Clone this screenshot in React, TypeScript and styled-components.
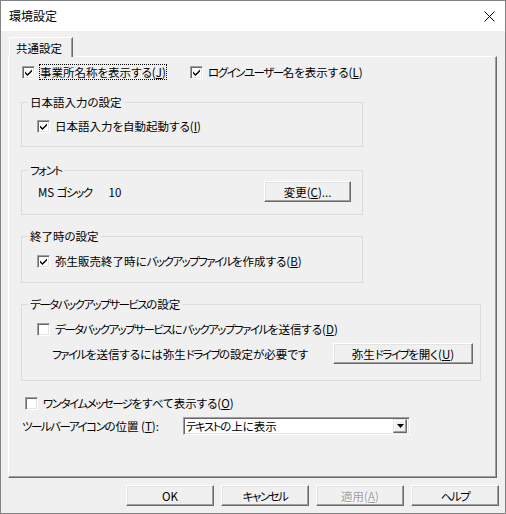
import React from 'react';
import styled, { createGlobalStyle } from 'styled-components';

const FONT = `"Noto Sans CJK JP", "Noto Sans", sans-serif`;

const Global = createGlobalStyle`
  html, body { margin: 0; padding: 0; background: #ffffff; }
  body { font-family: ${FONT}; font-size: 12px; }
  u { text-decoration: underline; text-underline-offset: 1px; }
`;

const Window = styled.div`
  width: 506px;
  height: 514px;
  box-sizing: border-box;
  border: 1px solid #838383;
  display: flex;
  flex-direction: column;
  background: #f0f0f0;
  font-family: ${FONT};
  font-size: 11.5px;
  line-height: 16px;
  color: #000;
  font-feature-settings: "palt";
`;

const TitleBar = styled.div`
  height: 30px;
  flex: none;
  background: #ffffff;
  display: flex;
  align-items: center;
  justify-content: space-between;
  padding: 0 10px 0 8px;
`;

const Title = styled.span`
  font-size: 12px;
`;

const Body = styled.div`
  flex: 1;
  display: flex;
  flex-direction: column;
  padding: 6px 8px 0 7px;
`;

const TabStrip = styled.div`
  display: flex;
  padding-left: 1px;
  position: relative;
  z-index: 1;
  margin-bottom: -1px;
`;

const Tab = styled.div`
  height: 20px;
  width: 64px;
  box-sizing: border-box;
  padding: 2px 0 0 6px;
  background: #f0f0f0;
  border-top: 1px solid #ffffff;
  border-left: 1px solid #ffffff;
  border-right: 1px solid #696969;
  box-shadow: inset -1px 0 #a0a0a0;
`;

const Panel = styled.div`
  height: 422px;
  box-sizing: border-box;
  border-top: 1px solid #ffffff;
  border-left: 1px solid #ffffff;
  border-right: 1px solid #696969;
  border-bottom: 1px solid #696969;
  box-shadow: inset -1px -1px #a0a0a0;
  padding: 6px 0 0 12px;
  display: flex;
  flex-direction: column;
`;

const Row = styled.div<{ $mt?: number; $pl?: number; $pr?: number }>`
  display: flex;
  align-items: center;
  height: 16px;
  margin-top: ${(p) => p.$mt ?? 0}px;
  padding-left: ${(p) => p.$pl ?? 0}px;
  padding-right: ${(p) => p.$pr ?? 0}px;
`;

const TallRow = styled(Row)`
  height: 21px;
`;

const CheckItem = styled.label<{ $w?: number }>`
  display: flex;
  align-items: center;
  gap: 4px;
  width: ${(p) => (p.$w ? `${p.$w}px` : 'auto')};
  white-space: nowrap;
`;

const Box = styled.span`
  width: 13px;
  height: 13px;
  box-sizing: border-box;
  flex: none;
  background: #ffffff;
  border: 1px solid;
  border-color: #a0a0a0 #ffffff #ffffff #a0a0a0;
  box-shadow: inset 1px 1px #696969, inset -1px -1px #e3e3e3;
  display: flex;
  align-items: center;
  justify-content: center;
`;

const LabelText = styled.span<{ $focus?: boolean }>`
  padding: 0 1px;
  outline: ${(p) => (p.$focus ? '1px dotted #000' : 'none')};
  outline-offset: -1px;
`;

const Kana = styled.span`
  letter-spacing: -1.5px;
`;

const Group = styled.fieldset<{ $w: number; $pt: number; $pb: number; $mt: number }>`
  margin: ${(p) => p.$mt}px 0 0 0;
  width: ${(p) => p.$w}px;
  box-sizing: border-box;
  border: 1px solid #dcdcdc;
  padding: ${(p) => p.$pt}px 0 ${(p) => p.$pb}px 15px;
  min-width: 0;
  display: flex;
  flex-direction: column;
`;

const Legend = styled.legend`
  margin-left: -9px;
  padding: 0 2px;
  line-height: 14px;
  height: 14px;
`;

const Button = styled.button<{ $w: number; $disabled?: boolean; $push?: boolean }>`
  width: ${(p) => p.$w}px;
  height: 21px;
  box-sizing: border-box;
  flex: none;
  margin-left: ${(p) => (p.$push ? 'auto' : '0')};
  background: #f0f0f0;
  border: 1px solid;
  border-color: #ffffff #696969 #696969 #ffffff;
  box-shadow: inset -1px -1px #a0a0a0, inset 1px 1px #e3e3e3;
  font-family: ${FONT};
  font-size: 11.5px;
  font-feature-settings: "palt";
  line-height: 16px;
  padding: 0;
  color: ${(p) => (p.$disabled ? '#a0a0a0' : '#000')};
  text-shadow: ${(p) => (p.$disabled ? '1px 1px #ffffff' : 'none')};
  cursor: default;
`;

const Spacer = styled.span<{ $w: number }>`
  display: inline-block;
  width: ${(p) => p.$w}px;
  flex: none;
`;

const FieldLabel = styled.span<{ $w: number }>`
  width: ${(p) => p.$w}px;
  flex: none;
  white-space: nowrap;
`;

const Combo = styled.div`
  width: 227px;
  height: 18px;
  box-sizing: border-box;
  background: #ffffff;
  border: 1px solid;
  border-color: #a0a0a0 #ffffff #ffffff #a0a0a0;
  box-shadow: inset 1px 1px #696969, inset -1px -1px #e3e3e3;
  display: flex;
  align-items: center;
  justify-content: space-between;
  padding: 0 2px 0 2px;
`;

const ComboText = styled.span`
  line-height: 14px;
`;

const DropButton = styled.span`
  width: 14px;
  height: 14px;
  box-sizing: border-box;
  background: #f0f0f0;
  border: 1px solid;
  border-color: #e3e3e3 #696969 #696969 #e3e3e3;
  box-shadow: inset -1px -1px #a0a0a0, inset 1px 1px #ffffff;
  display: flex;
  align-items: center;
  justify-content: center;
`;

const Footer = styled.div`
  display: flex;
  justify-content: flex-end;
  gap: 7px;
  padding: 7px 0 0 0;
  margin-right: -2px;
`;

const KANA_RE = /([\u30A0-\u30FF]+)/;

const J = ({ children }: { children: React.ReactNode }) => (
  <>
    {React.Children.map(children, (c) =>
      typeof c === 'string'
        ? c.split(KANA_RE).map((s, i) => (i % 2 ? <Kana key={i}>{s}</Kana> : s))
        : c
    )}
  </>
);

const Check = ({ on }: { on: boolean }) => (
  <Box>
    {on && (
      <svg width="9" height="9" viewBox="0 0 9 9">
        <path d="M1 3.5 L3.5 6 L8 1.5 L8 3.5 L3.5 8 L1 5.5 Z" fill="#000" />
      </svg>
    )}
  </Box>
);

const CheckBox = ({
  on,
  children,
  focus,
  w,
}: {
  on: boolean;
  children: React.ReactNode;
  focus?: boolean;
  w?: number;
}) => (
  <CheckItem $w={w}>
    <Check on={on} />
    <LabelText $focus={focus}>
      <J>{children}</J>
    </LabelText>
  </CheckItem>
);

export default function App() {
  return (
    <>
      <Global />
      <Window>
        <TitleBar>
          <Title>環境設定</Title>
          <svg width="11" height="11" viewBox="0 0 11 11">
            <path d="M0.5 0.5 L10.5 10.5 M10.5 0.5 L0.5 10.5" stroke="#000" strokeWidth="1" />
          </svg>
        </TitleBar>
        <Body>
          <TabStrip>
            <Tab>共通設定</Tab>
          </TabStrip>
          <Panel>
            <Row $mt={1} $pl={1}>
              <CheckBox on focus w={168}>
                事業所名称を表示する(<u>J</u>)
              </CheckBox>
              <CheckBox on>
                ログインユーザー名を表示する(<u>L</u>)
              </CheckBox>
            </Row>

            <Group $w={342} $mt={15} $pt={9} $pb={12}>
              <Legend>日本語入力の設定</Legend>
              <Row>
                <CheckBox on>
                  日本語入力を自動起動する(<u>I</u>)
                </CheckBox>
              </Row>
            </Group>

            <Group $w={342} $mt={16} $pt={4} $pb={12}>
              <Legend>
                <J>フォント</J>
              </Legend>
              <TallRow $pl={1} $pr={11}>
                <span>
                  <J>MS ゴシック</J>
                </span>
                <Spacer $w={17} />
                <span>10</span>
                <Button $w={87} $push>
                  変更(<u>C</u>)...
                </Button>
              </TallRow>
            </Group>

            <Group $w={342} $mt={14} $pt={10} $pb={13}>
              <Legend>終了時の設定</Legend>
              <Row>
                <CheckBox on>
                  弥生販売終了時にバックアップファイルを作成する(<u>B</u>)
                </CheckBox>
              </Row>
            </Group>

            <Group $w={460} $mt={14} $pt={10} $pb={16}>
              <Legend>
                <J>データバックアップサービスの設定</J>
              </Legend>
              <Row>
                <CheckBox on={false}>
                  データバックアップサービスにバックアップファイルを送信する(<u>D</u>)
                </CheckBox>
              </Row>
              <TallRow $mt={6} $pl={15} $pr={7}>
                <span>
                  <J>ファイルを送信するには弥生ドライブの設定が必要です</J>
                </span>
                <Button $w={140} $push>
                  <J>
                    弥生ドライブを開く(<u>U</u>)
                  </J>
                </Button>
              </TallRow>
            </Group>

            <Row $mt={14} $pl={4}>
              <CheckBox on={false}>
                ワンタイムメッセージをすべて表示する(<u>O</u>)
              </CheckBox>
            </Row>

            <Row $mt={6} $pl={1} style={{ height: 18 }}>
              <FieldLabel $w={161}>
                <J>
                  ツールバーアイコンの位置 (<u>T</u>):
                </J>
              </FieldLabel>
              <Combo>
                <ComboText>
                  <J>テキストの上に表示</J>
                </ComboText>
                <DropButton>
                  <svg width="7" height="4" viewBox="0 0 7 4">
                    <path d="M0 0 H7 L3.5 4 Z" fill="#000" />
                  </svg>
                </DropButton>
              </Combo>
            </Row>
          </Panel>
          <Footer>
            <Button $w={88}>OK</Button>
            <Button $w={88}>
              <J>キャンセル</J>
            </Button>
            <Button $w={88} $disabled>
              適用(<u>A</u>)
            </Button>
            <Button $w={88}>
              <J>ヘルプ</J>
            </Button>
          </Footer>
        </Body>
      </Window>
    </>
  );
}
